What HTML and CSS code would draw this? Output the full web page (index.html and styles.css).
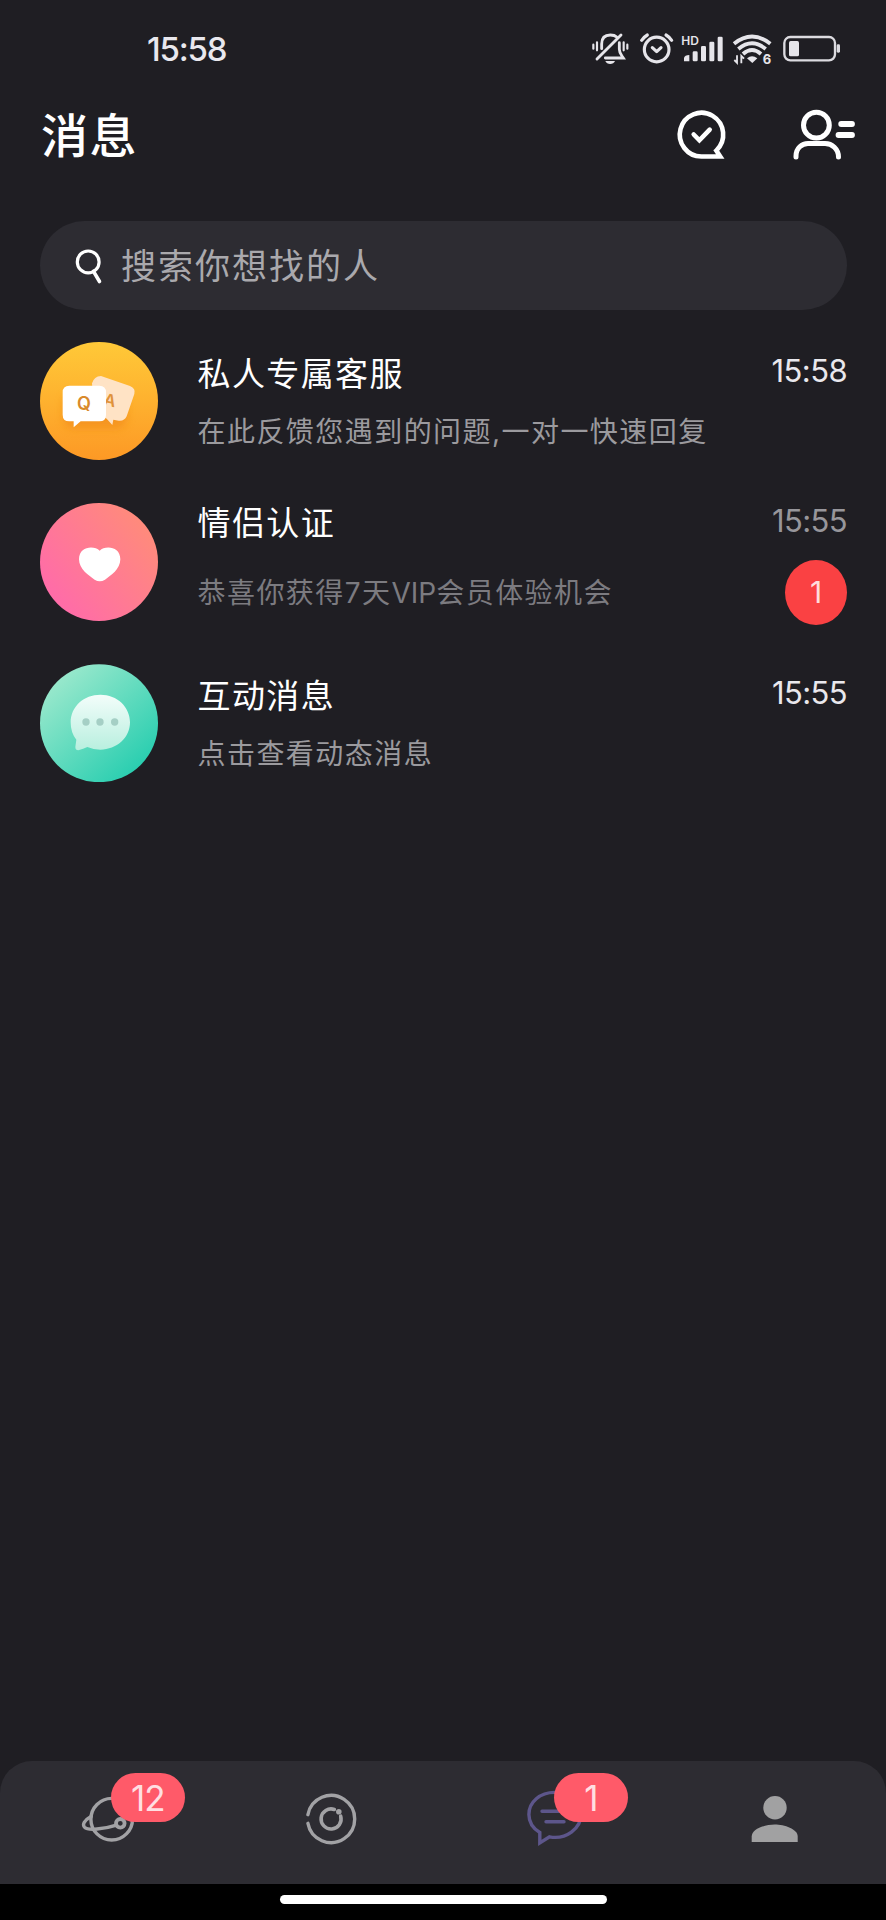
FILE: index.html
```html
<!DOCTYPE html>
<html lang="zh-CN">
<head>
<meta charset="utf-8">
<title>消息</title>
<link rel="stylesheet" href="styles.css">
</head>
<body>
<div class="status">
  <span class="clock">15:58</span>
  <div class="status-icons">
    <svg width="45" height="36" viewBox="30 30 135 108" fill="none" stroke="#e6e5ea" stroke-width="8.500" stroke-linecap="round">
      <path d="M40 74v12M51 67v24M131 67v24M142 74v12" stroke-width="6.500"/>
      <path d="M65 86V72C65 54 75 45 91 45c9 0 15 2 19 6M118 68v20c0 12 6 17 12 26H76"/>
      <path d="M123 45L51 117"/>
      <path d="M76 123h29c-4 12-25 12-29 0z" fill="#e6e5ea" stroke="none"/>
    </svg>
    <svg width="43" height="36" viewBox="165 30 129 108" fill="none" stroke="#e6e5ea" stroke-width="9.500" stroke-linecap="round" stroke-linejoin="round">
      <circle cx="230" cy="88.500" r="37"/>
      <path d="M217 83l13 12 13-12"/>
      <path d="M185 61q8-11 17-16M275 61q-8-11-17-16"/>
    </svg>
    <svg width="51" height="36" viewBox="294 30 153 108">
      <text class="hd" x="304" y="75">HD</text>
      <g fill="#e6e5ea">
        <path d="M312 124v-10q2-9 16-9v19z"/>
        <rect x="338" y="94" width="15" height="30" rx="4"/>
        <rect x="363" y="78" width="15" height="46" rx="4"/>
        <rect x="388" y="65" width="15" height="59" rx="4"/>
        <rect x="413" y="50" width="15" height="74" rx="4"/>
      </g>
    </svg>
    <svg width="50" height="36" viewBox="447 30 150 108" fill="none" stroke="#e6e5ea" stroke-width="11.500">
      <path d="M462 71Q516 28 571 71M475 87Q516 53 557 87M489 102Q516 78 543 102"/>
      <path d="M501 115q15-13 31 0l-15 14z" fill="#e6e5ea" stroke="none"/>
      <path d="M471 106v22l-8-8M484 130v-22l8 8" stroke-width="5.500"/>
      <text class="six" x="548" y="131">6</text>
    </svg>
    <svg width="63" height="36" viewBox="597 30 189 108" fill="none">
      <rect x="613" y="51" width="152" height="70" rx="18" stroke="#dcdbe0" stroke-width="7"/>
      <rect x="627" y="63" width="30" height="46" rx="5" fill="#e6e5ea"/>
      <rect x="770" y="73" width="10" height="25" rx="4" fill="#dcdbe0"/>
    </svg>
  </div>
</div>

<header class="header">
  <h1>消息</h1>
  <svg class="ic-read" width="60" height="60" viewBox="0 0 60 60" fill="none" stroke="#fff" stroke-width="4.600">
    <path d="M30.700 52.500H49.200L45.300 46.600A21.700 21.900 0 1 0 30.700 52.500z"/>
    <path d="M22.700 30.500l5.700 5.800 10.300-10.600" stroke-linecap="round"/>
  </svg>
  <svg width="70" height="60" viewBox="0 0 70 60" fill="none" stroke="#fff" stroke-width="5" stroke-linecap="round">
    <circle cx="26.400" cy="21.200" r="12.900"/>
    <path d="M6 53V52C6 44 12 39.500 18 39.500H35C42 39.500 48.500 45 48.500 53"/>
    <path d="M51.200 20H62M48.500 31H62" stroke-width="5.800"/>
  </svg>
</header>

<div class="search">
  <svg width="32" height="40" viewBox="0 0 32 40" fill="none" stroke="#fff" stroke-width="3.200">
    <circle cx="16.200" cy="15.900" r="10.900"/>
    <path d="M21.500 25.300L27.500 35.500" stroke-width="3.600" stroke-linecap="round"/>
  </svg>
  <span>搜索你想找的人</span>
</div>

<main class="list">
  <section class="row">
    <svg class="avatar" viewBox="28 36 354 354">
      <defs>
        <linearGradient id="gold" x1="0" y1="0" x2="0" y2="1"><stop offset="0" stop-color="#ffc938"/><stop offset="1" stop-color="#fd9925"/></linearGradient>
        <filter id="soft" x="-40%" y="-40%" width="180%" height="180%"><feGaussianBlur stdDeviation="12"/></filter>
      </defs>
      <circle cx="205" cy="213" r="177" fill="url(#gold)"/>
      <rect x="98" y="190" width="190" height="105" rx="30" fill="#ee8413" opacity=".55" filter="url(#soft)"/>
      <path d="M211 138L298 168Q316 176 311 192L288 259Q281 274 264 272L248 269 245 285 228 266 190 240 184 160Q190 139 211 138z" fill="#ffe3c5"/>
      <text class="letter-a" x="0" y="0" transform="translate(216 224) rotate(12)">A</text>
      <path d="M116 167H206Q226 167 226 187V254Q226 274 206 274H150L129 292V274H116Q96 274 96 254V187Q96 167 116 167z" fill="#fff"/>
      <text class="letter-q" x="139" y="240">Q</text>
    </svg>
    <div class="text">
      <h2>私人专属客服</h2>
      <p>在此反馈您遇到的问题,一对一快速回复</p>
    </div>
    <div class="meta"><time>15:58</time></div>
  </section>

  <section class="row row-high">
    <svg class="avatar" viewBox="28 39 354 354">
      <defs><linearGradient id="pink" x1=".12" y1=".8" x2=".88" y2=".2"><stop offset="0" stop-color="#ff6ca8"/><stop offset="1" stop-color="#ff8a7c"/></linearGradient></defs>
      <circle cx="205" cy="216" r="177" fill="url(#pink)"/>
      <path d="M207 182C222 166 269 167 269 208C269 238 240 257 223 269Q207 278 192 269C175 257 145 238 145 208C145 167 192 166 207 182z" fill="#fff"/>
    </svg>
    <div class="text">
      <h2>情侣认证</h2>
      <p class="dim">恭喜你获得7天<span class="latin">VIP</span>会员体验机会</p>
    </div>
    <div class="meta dim-time"><time>15:55</time><span class="count">1</span></div>
  </section>

  <section class="row">
    <svg class="avatar" viewBox="28 43 354 354">
      <defs>
        <linearGradient id="mint" x1=".15" y1=".12" x2=".85" y2=".88"><stop offset="0" stop-color="#99e8cc"/><stop offset="1" stop-color="#29ceb0"/></linearGradient>
        <linearGradient id="cloud" x1="0" y1="0" x2="0" y2="1"><stop offset="0" stop-color="#f3fdfa"/><stop offset="1" stop-color="#b8efdf"/></linearGradient>
      </defs>
      <circle cx="205" cy="220.500" r="177" fill="url(#mint)"/>
      <path d="M209 135C260 135 298 172 298 218C298 264 258 300 209 300Q188 300 170 292Q158 297 143 302Q134 302 134 292L137 270Q120 250 120 218C120 170 160 135 209 135z" fill="url(#cloud)"/>
      <g fill="#a5cfc5"><circle cx="166" cy="217" r="11"/><circle cx="208" cy="217" r="11"/><circle cx="252" cy="217" r="11"/></g>
    </svg>
    <div class="text">
      <h2>互动消息</h2>
      <p>点击查看动态消息</p>
    </div>
    <div class="meta"><time>15:55</time></div>
  </section>
</main>

<nav class="tabs">
  <div class="tab">
    <svg viewBox="0 0 60 60" fill="none" stroke="#a2a2a5" stroke-width="3.400" stroke-linecap="round">
      <circle cx="30.700" cy="30.200" r="20.800"/>
      <path d="M10 27.500C3 31.500 1.200 35.500 3.500 38.200C7 42 23 40 34.500 36.300"/>
      <circle cx="39.300" cy="34.300" r="4.300" fill="#2d2c32" stroke-width="3.800"/>
    </svg>
    <span class="bubble">12</span>
  </div>
  <div class="tab">
    <svg viewBox="0 0 60 60" fill="none" stroke="#a2a2a5" stroke-width="3.400" stroke-linecap="round">
      <path d="M5.900 25.700A23.600 23.600 0 1 1 5.900 34.300"/>
      <path d="M32.300 20.500A10 10 0 1 0 38.700 27.200" stroke-width="3.600"/>
      <circle cx="36.800" cy="22.700" r="2.800" fill="#a2a2a5" stroke="none"/>
    </svg>
  </div>
  <div class="tab">
    <svg viewBox="0 0 60 60" fill="none" stroke="#5d568b" stroke-width="3.400">
      <path d="M25.500 47.800C42 51 57 39.500 57 25.500C57 13 46 3.400 30.700 3.400C16 3.400 4.900 13 4.900 25.500C4.900 34 10 40 15.800 43.500V54z"/>
      <path d="M18 22.300H42M22 32.700H40" stroke-linecap="round"/>
    </svg>
    <span class="bubble">1</span>
  </div>
  <div class="tab">
    <svg viewBox="0 0 60 60" fill="#a1a1a2">
      <circle cx="30" cy="18.700" r="11.700"/>
      <path d="M6.700 53V47.500C6.700 40 20 35.500 29.700 35.500S52.700 40 52.700 47.500V53z"/>
    </svg>
  </div>
</nav>
<div class="home"><div class="home-bar"></div></div>
</body>
</html>
```

FILE: styles.css
```css
* { box-sizing: border-box; margin: 0; padding: 0; }

body {
  width: 886px;
  height: 1920px;
  display: flex;
  flex-direction: column;
  background: #1f1e23;
  color: #fff;
  font-family: Inter, "Noto Sans CJK SC", sans-serif;
  overflow: hidden;
}

svg { display: block; flex: none; }

.status {
  height: 96px;
  padding: 30px 44px 0 147px;
  display: flex;
  justify-content: space-between;
  align-items: flex-start;
}
.clock {
  font-size: 33px;
  font-weight: 500;
  line-height: 38px;
  letter-spacing: -1.200px;
  color: #e9e8ee;
}
.status-icons { display: flex; }
.hd { font: 600 36px Inter, sans-serif; fill: #e6e5ea; }
.six { font: 700 39px Inter, sans-serif; fill: #e6e5ea; stroke: none; }
.letter-q { font: 600 54px Inter, sans-serif; fill: #d98a2b; }
.letter-a { font: 600 50px Inter, sans-serif; fill: #e0923a; }

.header {
  height: 125px;
  padding: 8px 26px 0 41px;
  display: flex;
}
h1 {
  flex: 1;
  padding-top: 1px;
  font-size: 47px;
  font-weight: 500;
  line-height: 62px;
  letter-spacing: 1.5px;
}
.ic-read { margin-right: 59px; }

.search {
  height: 89px;
  margin: 0 39px 0 40px;
  padding-left: 32px;
  border-radius: 45px;
  background: #2d2c32;
  display: flex;
  align-items: center;
  gap: 17px;
}
.search span {
  font-size: 35px;
  line-height: 50px;
  letter-spacing: 2px;
  color: #aaa9ad;
}

.list { flex: 1; padding-top: 11px; }
.row {
  height: 161px;
  padding: 0 39px 0 39.500px;
  display: flex;
}
.avatar { width: 118px; height: 118px; margin-top: 21px; }
.text { flex: 1; padding: 33px 0 0 40px; }
h2 {
  height: 40px;
  font-size: 33px;
  font-weight: 400;
  line-height: 40px;
  letter-spacing: 1.400px;
}
.text p {
  margin-top: 20px;
  font-size: 28px;
  line-height: 36px;
  letter-spacing: 1.450px;
  color: #9b9a9e;
}
.text .dim { color: #7c7b80; margin-top: 32px; }
.latin { letter-spacing: 0; }
.meta {
  padding-top: 30px;
  display: flex;
  flex-direction: column;
  align-items: flex-end;
}
time {
  font-size: 31px;
  line-height: 40px;
  letter-spacing: -.600px;
  color: #e9e8ed;
}
.row-high .text { padding-top: 21px; }
.row-high .meta { padding-top: 19px; }
.dim-time time { color: #97969b; }
.count {
  width: 62px;
  height: 65px;
  margin-top: 19px;
  border-radius: 50%;
  background: #fa4143;
  color: #ffdcdc;
  font-size: 30px;
  line-height: 65px;
  text-align: center;
}

.tabs {
  height: 123px;
  border-radius: 32px 32px 0 0;
  background: #2d2c32;
  display: grid;
  grid-template-columns: repeat(4, 1fr);
}
.tab { position: relative; padding-top: 28px; }
.tab svg { width: 60px; height: 60px; margin: 0 auto; }
.bubble {
  position: absolute;
  left: 50%;
  top: 12px;
  width: 74px;
  height: 49px;
  border-radius: 25px;
  background: #ff5a69;
  color: #ffdfe2;
  font-size: 35px;
  line-height: 50px;
  letter-spacing: -1px;
  text-align: center;
}
.home {
  height: 36px;
  padding-top: 11px;
  background: #000;
}
.home-bar {
  width: 327px;
  height: 9px;
  margin: 0 auto;
  border-radius: 5px;
  background: #fff;
}
```
